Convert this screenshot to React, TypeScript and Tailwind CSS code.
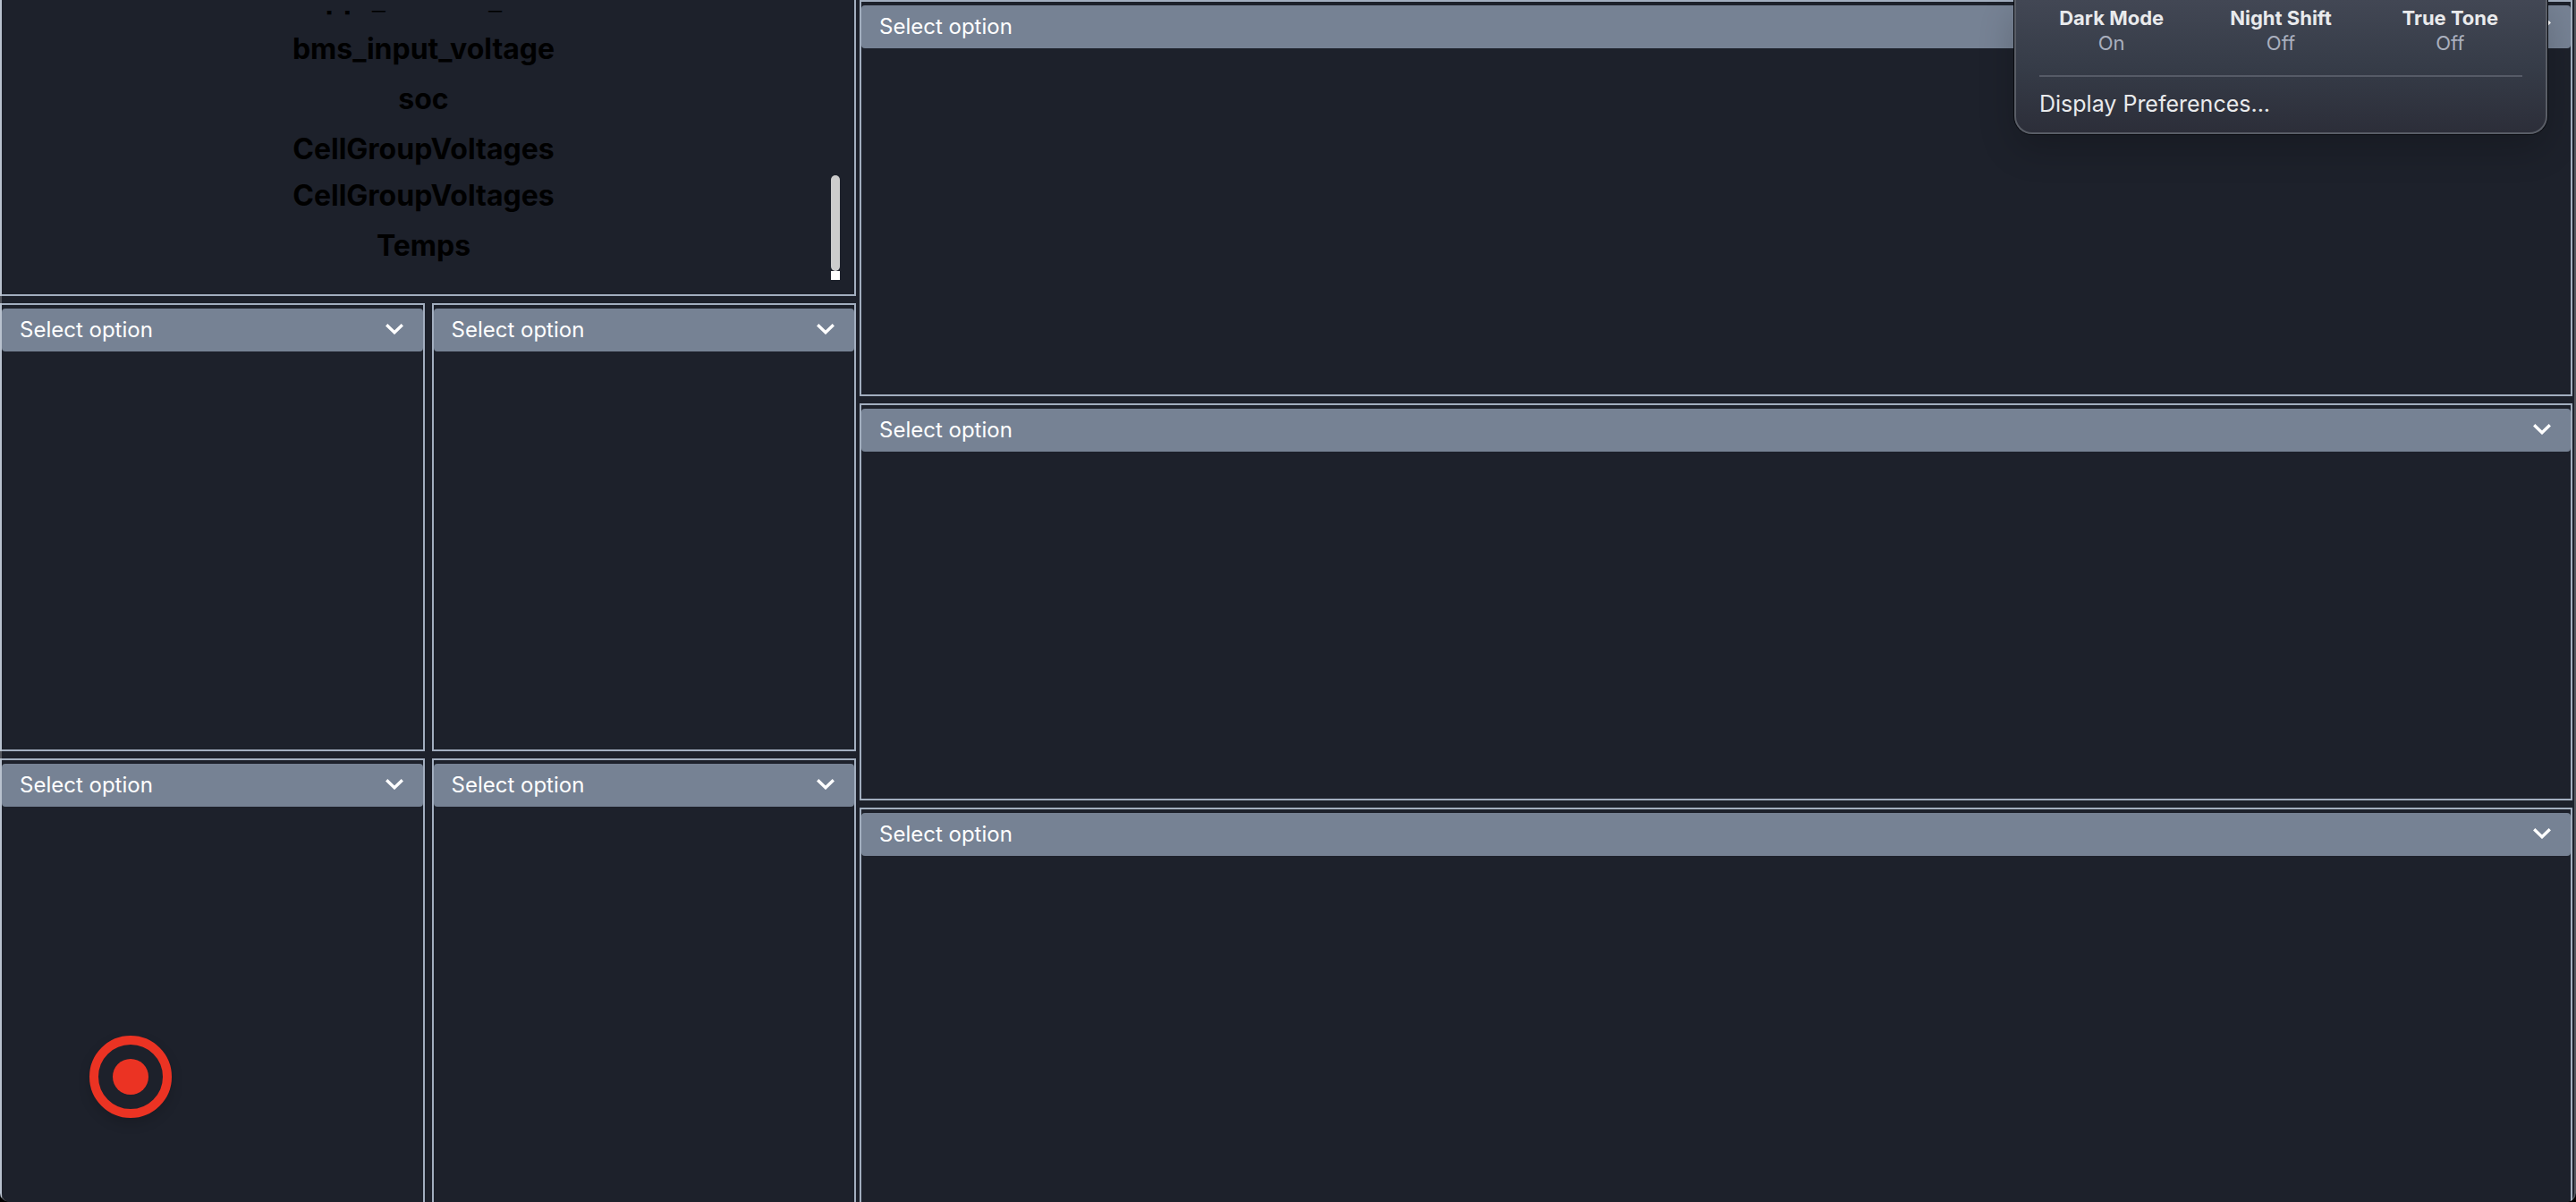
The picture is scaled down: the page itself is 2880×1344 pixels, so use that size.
import React from "react";

const fieldNames = [
  "mppt_current_out",
  "bms_input_voltage",
  "soc",
  "CellGroupVoltages",
];

const displayModes = [
  { name: "Dark Mode", state: "On" },
  { name: "Night Shift", state: "Off" },
  { name: "True Tone", state: "Off" },
];

function OptionSelect({ label }: { label: string }) {
  return (
    <div className="mt-1 grid h-12 items-center rounded bg-[#768294]">
      <select
        aria-label={label}
        defaultValue=""
        className="col-start-1 row-start-1 h-12 w-full appearance-none rounded bg-transparent px-5 text-[24px] text-white outline-none"
      >
        <option value="">Select option</option>
      </select>
      <svg
        viewBox="0 0 20 12"
        className="pointer-events-none col-start-1 row-start-1 mr-[22px] mb-0.5 h-3 w-5 justify-self-end"
        fill="none"
        stroke="white"
        strokeWidth="3.3"
        aria-hidden="true"
      >
        <path d="M1.2 1.2 L10 9.8 L18.8 1.2" />
      </svg>
    </div>
  );
}

function Panel({ label, edges }: { label: string; edges: string }) {
  return (
    <section className={"min-w-0 border-[#a2aebf] " + edges}>
      <OptionSelect label={label} />
    </section>
  );
}

function FieldList() {
  return (
    <section className="flex min-h-0 border-2 border-t-0 border-[#a2aebf] px-4 pt-3 pb-4">
      <div className="flex min-h-0 flex-1 flex-col justify-end overflow-hidden text-center text-[32px] font-bold text-black">
        {fieldNames.map((name) => (
          <p key={name} className="h-14 shrink-0 leading-[56px]">
            {name}
          </p>
        ))}
        <p className="h-12 shrink-0 leading-[48px]">CellGroupVoltages</p>
        <p className="mb-1.5 h-16 shrink-0 leading-[64px]">Temps</p>
      </div>
      <div className="flex w-2.5 flex-col justify-end" aria-hidden="true">
        <div className="h-[107px] rounded-full bg-[#cccccc]" />
        <div className="h-2.5 bg-white" />
      </div>
    </section>
  );
}

function DisplayMenu() {
  return (
    <div className="absolute top-0 right-8 w-[596px] rounded-b-[20px] border-2 border-t-0 border-[#595d66] bg-linear-to-b from-[#424754] via-[#363c48] to-[#2c2e39] px-[26px] text-[#e9eaec] shadow-[0_0_0_1px_#090b10,0_16px_40px_rgba(0,0,0,0.2)]">
      <div className="-mx-3.5 grid grid-cols-3 pt-1.5 text-center text-[22px] leading-7">
        {displayModes.map((mode) => (
          <button key={mode.name} type="button" className="block">
            <span className="block font-bold">{mode.name}</span>
            <span className="block text-[#a9afbe]">{mode.state}</span>
          </button>
        ))}
      </div>
      <hr className="mt-[22px] border-t-2 border-[#565b67]" />
      <button type="button" className="mt-3 mb-3.5 block text-[25px] leading-9">
        Display Preferences...
      </button>
    </div>
  );
}

export default function App() {
  return (
    <div className="h-screen bg-black font-[Inter,'Liberation_Sans',sans-serif]">
      <main className="relative grid h-full grid-cols-[957fr_1915fr] gap-1 overflow-hidden rounded-b-[10px] bg-[#1d212b] pr-1">
        <div className="grid min-h-0 grid-rows-[331fr_501fr_496fr] gap-2">
          <FieldList />
          <div className="grid grid-cols-2 gap-2">
            <Panel label="Middle left chart" edges="border-2" />
            <Panel label="Middle right chart" edges="border-2" />
          </div>
          <div className="grid grid-cols-2 gap-2">
            <Panel label="Bottom left chart" edges="border-2 border-b-0" />
            <Panel label="Bottom right chart" edges="border-2 border-b-0" />
          </div>
        </div>
        <div className="grid min-h-0 grid-rows-[443fr_444fr_441fr] gap-2">
          <Panel label="Upper wide chart" edges="border-2" />
          <Panel label="Middle wide chart" edges="border-2" />
          <Panel label="Lower wide chart" edges="border-2 border-b-0" />
        </div>
        <button
          type="button"
          aria-label="Record"
          className="absolute bottom-[94px] left-[100px] rounded-full shadow-[0_6px_14px_rgba(0,0,0,0.15)]"
        >
          <svg viewBox="0 0 92 92" className="size-[92px]" aria-hidden="true">
            <circle cx="46" cy="46" r="41" fill="none" stroke="#eb3323" strokeWidth="10" />
            <circle cx="46" cy="46" r="20" fill="#eb3323" />
          </svg>
        </button>
        <div className="pointer-events-none absolute inset-0 rounded-b-[10px] border-x-2 border-white/25" />
        <DisplayMenu />
      </main>
    </div>
  );
}
